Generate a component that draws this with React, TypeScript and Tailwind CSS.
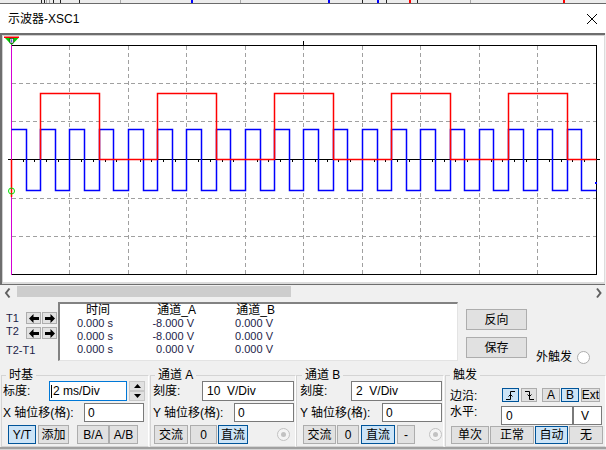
import React from "react";

const HP = 14.62;
const X = (k: number) => Math.round(11 + HP * k) + 0.5;

function Plot() {
  const grid: React.ReactElement[] = [];
  for (let n = 1; n <= 9; n++) {
    const x = Math.round(11 + 58.48 * n) + 0.5;
    grid.push(<line key={"v" + n} x1={x} y1={46} x2={x} y2={274} />);
  }
  for (const n of [1, 2, 4, 5]) {
    const y = Math.round(45 + 38.17 * n) + 0.5;
    grid.push(<line key={"h" + n} x1={12} y1={y} x2={596} y2={y} />);
  }
  const ticks: React.ReactElement[] = [];
  for (let n = 1; n <= 49; n++) {
    const x = Math.round(11 + 11.696 * n) + 0.5;
    ticks.push(<line key={"t" + n} x1={x} y1={159} x2={x} y2={162} />);
  }
  let b = `M ${X(0)} 129.5`;
  for (let k = 0; k < 40; k++) {
    b += ` H ${X(k + 1)}`;
    if (k < 39) b += ` V ${k % 2 === 0 ? 190.5 : 129.5}`;
  }
  let r = `M ${X(2)} 159.5`;
  for (let n = 0; n < 5; n++) {
    r += ` V 93.5 H ${X(6 + 8 * n)} V 159.5`;
    if (n < 4) r += ` H ${X(10 + 8 * n)}`;
  }
  r += " H 596.5";
  return (
    <svg width={601} height={246} viewBox="3 36 601 246" className="block">
      <g stroke="#a0a0a0" strokeWidth={1} strokeDasharray="4 3" shapeRendering="crispEdges">
        {grid}
      </g>
      <g stroke="#000" strokeWidth={1} shapeRendering="crispEdges" fill="none">
        <path d="M11.5 45.5 H596.5 V274.5 H11.5" />
        <line x1={8} y1={159.5} x2={600} y2={159.5} />
        <line x1={303.5} y1={41} x2={303.5} y2={45} />
        {ticks}
      </g>
      <line x1={11.5} y1={38} x2={11.5} y2={275} stroke="#d400d4" strokeWidth={1} shapeRendering="crispEdges" />
      <path d={b} stroke="#0000ff" strokeWidth={1.5} fill="none" strokeLinejoin="miter" />
      <path d={r} stroke="#ff0000" strokeWidth={1.5} fill="none" strokeLinejoin="miter" />
      <line x1={11.5} y1={159.5} x2={11.5} y2={197} stroke="#ff0000" strokeWidth={1.5} />
      <rect x={595} y={182} width={2} height={2} fill="#0000ff" />
      <circle cx={11.5} cy={191} r={3} stroke="#00dd00" strokeWidth={1} fill="none" />
      <rect x={4} y={36.5} width={15} height={1.5} fill="#ff0000" />
      <path d="M5 38 H18.5 L11.7 45 Z" fill="#00cc00" />
      <rect x={10} y={38.5} width={3.5} height={4.5} fill="#fff" stroke="#000" strokeWidth={0.5} />
      <line x1={11.7} y1={39.3} x2={11.7} y2={42.3} stroke="#0000cc" strokeWidth={0.8} />
    </svg>
  );
}

function TopStrip() {
  const black = [41, 44, 53, 60, 79, 362, 386, 417];
  const blue = [191, 328, 377];
  const red = [409, 563];
  const gray = [46, 49, 120, 240, 470];
  return (
    <div className="h-[4px] shrink-0 bg-[#ececec] border-b border-[#6a6a6a]">
      <svg width={606} height={3} className="block" shapeRendering="crispEdges">
        {gray.map((x) => (
          <rect key={"g" + x} x={x} y={0} width={1} height={3} fill="#a8a8a8" />
        ))}
        {black.map((x) => (
          <rect key={"k" + x} x={x} y={0} width={1} height={3} fill="#222" />
        ))}
        {blue.map((x) => (
          <rect key={"b" + x} x={x} y={0} width={2} height={3} fill="#0000ff" />
        ))}
        {red.map((x) => (
          <rect key={"r" + x} x={x} y={0} width={2} height={3} fill="#ff0000" />
        ))}
      </svg>
    </div>
  );
}

function Btn({ c, sel, children }: { c: string; sel?: boolean; children: React.ReactNode }) {
  return (
    <div
      className={`${c} shrink-0 flex items-center justify-center border text-[12px] leading-none ${
        sel ? "bg-[#cce4f7] border-[#005499]" : "bg-[#e1e1e1] border-[#adadad]"
      }`}
    >
      {children}
    </div>
  );
}

function Input({ c, children, focus }: { c: string; children?: React.ReactNode; focus?: boolean }) {
  return (
    <div
      className={`${c} shrink-0 bg-white border flex items-center text-[12px] leading-none whitespace-pre ${
        focus ? "border-[#0078d7]" : "border-[#7a7a7a]"
      }`}
    >
      {children}
    </div>
  );
}

function Radio({ c }: { c: string }) {
  return (
    <div className={`${c} shrink-0 w-[13px] h-[13px] rounded-full border border-[#c2c2c2] bg-[#f4f4f4] flex items-center justify-center`}>
      <div className="w-[5px] h-[5px] rounded-full bg-[#c2c2c2]" />
    </div>
  );
}

const ArrL = () => (
  <svg width="10" height="9" viewBox="0 0 10 9">
    <path d="M0 4.5 L4.5 0 V3 H10 V6 H4.5 V9 Z" fill="#000" />
  </svg>
);
const ArrR = () => (
  <svg width="10" height="9" viewBox="0 0 10 9">
    <path d="M10 4.5 L5.5 0 V3 H0 V6 H5.5 V9 Z" fill="#000" />
  </svg>
);

function ArrowPair() {
  return (
    <>
      <div className="w-[15px] h-[12px] shrink-0 bg-[#e1e1e1] border border-[#adadad] flex items-center justify-center">
        <ArrL />
      </div>
      <div className="ml-[1px] w-[15px] h-[12px] shrink-0 bg-[#e1e1e1] border border-[#adadad] flex items-center justify-center">
        <ArrR />
      </div>
    </>
  );
}

const EdgeUp = () => (
  <svg width="11" height="11" viewBox="0 0 11 11" fill="none" stroke="#000" strokeWidth="1">
    <path d="M1 9.5 H5.5 V1.5 H10" />
    <path d="M3.5 6.5 L5.5 4.5 L7.5 6.5" />
  </svg>
);
const EdgeDown = () => (
  <svg width="11" height="11" viewBox="0 0 11 11" fill="none" stroke="#000" strokeWidth="1">
    <path d="M1 1.5 H5.5 V9.5 H10" />
    <path d="M3.5 4.5 L5.5 6.5 L7.5 4.5" />
  </svg>
);

const Lbl = ({ c, children }: { c: string; children: React.ReactNode }) => (
  <div className={`${c} shrink-0 text-[12px] leading-none whitespace-nowrap`}>{children}</div>
);

const FS = "mt-[5px] h-[78px] shrink-0 border border-t-[#d4d4d4] border-l-[#d4d4d4] border-r-[#ffffff] border-b-[#d4d4d4]";
const LG = "px-[3px] text-[12px] leading-[12px]";

export default function App() {
  return (
    <div className="w-[606px] h-[450px] bg-[#f0f0f0] overflow-hidden flex flex-col font-['Liberation_Sans','Noto_Sans_CJK_SC',sans-serif] text-black">
      <TopStrip />
      <div className="h-[29px] shrink-0 bg-white flex items-center justify-between pl-[8px] pr-[9px]">
        <span className="text-[12px] leading-none">示波器-XSC1</span>
        <svg width="10" height="10" viewBox="0 0 10 10">
          <path d="M0 0 L10 10 M10 0 L0 10" stroke="#000" strokeWidth="1" />
        </svg>
      </div>

      <div className="w-[605px] shrink-0 border-t-2 border-l-2 border-b border-[#6e6e6e]">
        <div className="bg-white border-t border-l border-r border-b-2 border-t-[#cfcfcf] border-l-[#cfcfcf] border-r-[#dcdcdc] border-b-[#dcdcdc]">
          <Plot />
        </div>
      </div>

      <div className="h-[16px] shrink-0 flex items-start">
        <svg width="17" height="16" viewBox="0 0 17 16" className="shrink-0">
          <path d="M9.5 3.5 L6 8 L9.5 12.5" stroke="#606060" strokeWidth="2" fill="none" />
        </svg>
        <div className="mt-[1px] w-[274px] h-[11px] bg-[#cdcdcd] shrink-0" />
        <div className="flex-1" />
        <svg width="16" height="16" viewBox="0 0 16 16" className="shrink-0">
          <path d="M7 3.5 L10.5 8 L7 12.5" stroke="#606060" strokeWidth="2" fill="none" />
        </svg>
      </div>

      <div className="h-[63px] shrink-0 flex">
        <div className="w-[58px] shrink-0 flex flex-col text-[11px] leading-none text-[#1c1c48]">
          <div className="mt-[11px] h-[12px] flex items-center">
            <span className="w-[26px] pl-[6px]">T1</span>
            <ArrowPair />
          </div>
          <div className="mt-[3px] h-[12px] flex items-center">
            <span className="w-[26px] pl-[6px] -mt-[3px]">T2</span>
            <ArrowPair />
          </div>
          <div className="mt-[5px] h-[12px] flex items-center">
            <span className="pl-[6px]">T2-T1</span>
          </div>
        </div>
        <div className="mt-[1px] w-[400px] h-[59px] shrink-0 bg-white border-t-2 border-l-2 border-t-[#828282] border-l-[#828282] border-r border-b border-r-[#e3e3e3] border-b-[#e3e3e3] flex">
          <div className="w-[53px] flex flex-col">
            <div className="h-[13px] text-[12px] leading-[13px] text-right pr-[3px]">时间</div>
            {["0.000 s", "0.000 s", "0.000 s"].map((v, i) => (
              <div key={i} className="h-[13px] text-[11px] leading-[13px] text-right text-[#1c1c48]">{v}</div>
            ))}
          </div>
          <div className="w-[83px] flex flex-col">
            <div className="h-[13px] text-[12px] leading-[13px] text-right">通道_A</div>
            {["-8.000 V", "-8.000 V", "0.000 V"].map((v, i) => (
              <div key={i} className="h-[13px] text-[11px] leading-[13px] text-right pr-[2px] text-[#1c1c48]">{v}</div>
            ))}
          </div>
          <div className="w-[79px] flex flex-col">
            <div className="h-[13px] text-[12px] leading-[13px] text-right">通道_B</div>
            {["0.000 V", "0.000 V", "0.000 V"].map((v, i) => (
              <div key={i} className="h-[13px] text-[11px] leading-[13px] text-right pr-[2px] text-[#1c1c48]">{v}</div>
            ))}
          </div>
        </div>
        <div className="ml-[8px] w-[61px] shrink-0 flex flex-col">
          <Btn c="mt-[8px] w-[61px] h-[21px]">反向</Btn>
          <Btn c="mt-[7px] w-[61px] h-[21px]">保存</Btn>
        </div>
        <div className="ml-[9px] mt-[49px] h-[14px] flex items-center">
          <span className="text-[12px] leading-none">外触发</span>
          <div className="ml-[5px] w-[13px] h-[13px] rounded-full border border-[#adadad] bg-white" />
        </div>
      </div>

      <div className="h-[83px] shrink-0 flex items-start">
        {/* 时基 */}
        <fieldset className={`ml-[1px] w-[148px] ${FS}`}>
          <legend className={`ml-[4px] ${LG}`}>时基</legend>
          <div className="flex flex-col">
            <div className="h-[20px] flex items-center">
              <Lbl c="ml-[1px] w-[46px]">标度:</Lbl>
              <Input c="w-[78px] h-[20px] pl-[1px]" focus>
                <span className="w-[1px] h-[13px] bg-black mr-[1px]" />2 ms/Div
              </Input>
              <div className="ml-[2px] w-[16px] h-[20px] shrink-0 flex flex-col">
                <div className="h-[10px] bg-[#e1e1e1] border border-[#c8c8c8] flex items-center justify-center">
                  <svg width="7" height="4" viewBox="0 0 7 4"><path d="M0 4 L3.5 0 L7 4Z" fill="#000" /></svg>
                </div>
                <div className="h-[10px] bg-[#e1e1e1] border border-[#c8c8c8] flex items-center justify-center">
                  <svg width="7" height="4" viewBox="0 0 7 4"><path d="M0 0 L3.5 4 L7 0Z" fill="#000" /></svg>
                </div>
              </div>
            </div>
            <div className="mt-[2px] h-[19px] flex items-center">
              <Lbl c="ml-[1px] w-[81px]">X 轴位移(格):</Lbl>
              <Input c="w-[60px] h-[19px] pl-[3px]">0</Input>
            </div>
            <div className="mt-[3px] h-[19px] flex items-center">
              <Btn c="ml-[6px] w-[28px] h-[19px]" sel>Y/T</Btn>
              <Btn c="ml-[2px] w-[31px] h-[19px]">添加</Btn>
              <Btn c="ml-[8px] w-[32px] h-[19px]">B/A</Btn>
              <Btn c="w-[29px] h-[19px]">A/B</Btn>
            </div>
          </div>
        </fieldset>

        {/* 通道 A */}
        <fieldset className={`ml-[1px] w-[146px] ${FS}`}>
          <legend className={`ml-[4px] ${LG}`}>通道 A</legend>
          <div className="flex flex-col">
            <div className="h-[20px] flex items-center">
              <Lbl c="ml-[2px] w-[49px]">刻度:</Lbl>
              <Input c="w-[92px] h-[20px] pl-[4px]">10  V/Div</Input>
            </div>
            <div className="mt-[2px] h-[19px] flex items-center">
              <Lbl c="ml-[2px] w-[81px]">Y 轴位移(格):</Lbl>
              <Input c="w-[60px] h-[19px] pl-[3px]">0</Input>
            </div>
            <div className="mt-[3px] h-[19px] flex items-center">
              <Btn c="ml-[3px] w-[34px] h-[19px]">交流</Btn>
              <Btn c="ml-[2px] w-[27px] h-[19px]">0</Btn>
              <Btn c="ml-[1px] w-[30px] h-[19px]" sel>直流</Btn>
              <Radio c="ml-[29px]" />
            </div>
          </div>
        </fieldset>

        {/* 通道 B */}
        <fieldset className={`w-[148px] ${FS}`}>
          <legend className={`ml-[5px] ${LG}`}>通道 B</legend>
          <div className="flex flex-col">
            <div className="h-[20px] flex items-center">
              <Lbl c="ml-[3px] w-[51px]">刻度:</Lbl>
              <Input c="w-[91px] h-[20px] pl-[4px]">2  V/Div</Input>
            </div>
            <div className="mt-[2px] h-[19px] flex items-center">
              <Lbl c="ml-[3px] w-[82px]">Y 轴位移(格):</Lbl>
              <Input c="w-[60px] h-[19px] pl-[3px]">0</Input>
            </div>
            <div className="mt-[3px] h-[19px] flex items-center">
              <Btn c="ml-[6px] w-[33px] h-[19px]">交流</Btn>
              <Btn c="ml-[1px] w-[22px] h-[19px]">0</Btn>
              <Btn c="ml-[2px] w-[34px] h-[19px]" sel>直流</Btn>
              <Btn c="ml-[2px] w-[18px] h-[19px]">-</Btn>
              <Radio c="ml-[14px]" />
            </div>
          </div>
        </fieldset>

        {/* 触发 */}
        <fieldset className={`ml-[1px] w-[161px] ${FS}`}>
          <legend className={`ml-[4px] ${LG}`}>触发</legend>
          <div className="flex flex-col">
            <div className="h-[21px] flex items-end">
              <Lbl c="ml-[4px] w-[52px] leading-[14px]">边沿:</Lbl>
              <Btn c="w-[17px] h-[14px]" sel>
                <EdgeUp />
              </Btn>
              <Btn c="ml-[2px] w-[16px] h-[14px]">
                <EdgeDown />
              </Btn>
              <Btn c="ml-[5px] w-[18px] h-[14px]">A</Btn>
              <Btn c="ml-[1px] w-[18px] h-[14px]" sel>B</Btn>
              <Btn c="ml-[2px] w-[19px] h-[14px]">Ext</Btn>
            </div>
            <div className="mt-[4px] h-[19px] flex items-start">
              <Lbl c="ml-[4px] w-[51px] leading-[14px]">水平:</Lbl>
              <Input c="w-[72px] h-[19px] pl-[4px]">0</Input>
              <Input c="w-[29px] h-[19px] pl-[7px]">V</Input>
            </div>
            <div className="mt-[1px] h-[18px] flex items-center">
              <Btn c="ml-[5px] w-[38px] h-[18px]">单次</Btn>
              <Btn c="ml-[1px] w-[44px] h-[18px]">正常</Btn>
              <Btn c="ml-[1px] w-[33px] h-[18px]" sel>自动</Btn>
              <Btn c="ml-[1px] w-[34px] h-[18px]">无</Btn>
            </div>
          </div>
        </fieldset>
      </div>

      <div className="h-[2px] shrink-0 bg-[#a0a0a0]" />
      <div className="h-[1px] shrink-0 bg-[#d4d4d4]" />
    </div>
  );
}
